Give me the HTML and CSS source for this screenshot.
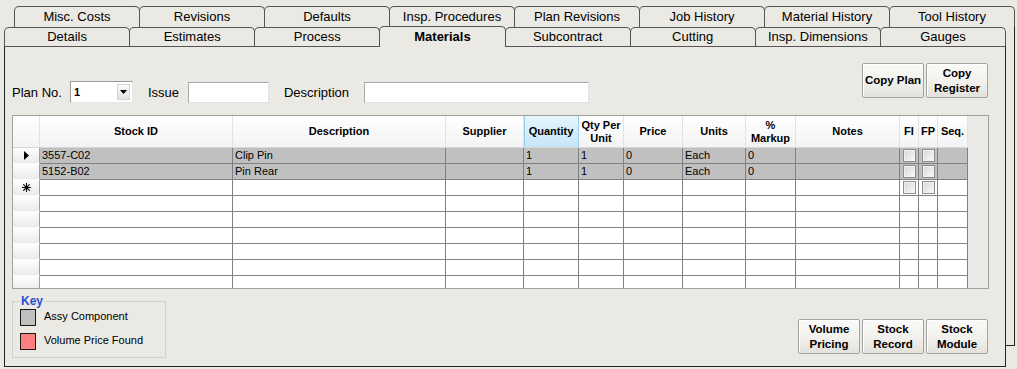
FILE: index.html
```html
<!DOCTYPE html>
<html lang="en">

<head>
  <meta charset="utf-8">
  <meta name="viewport" content="width=device-width, initial-scale=1.0">
  <title>Plan - Materials</title>
  <link rel="stylesheet" href="styles.css">
</head>

<body>
  <div id="tab-control">

    <div class="tab-row back-row">
      <div class="tab">Misc. Costs</div>
      <div class="tab">Revisions</div>
      <div class="tab">Defaults</div>
      <div class="tab">Insp. Procedures</div>
      <div class="tab">Plan Revisions</div>
      <div class="tab">Job History</div>
      <div class="tab">Material History</div>
      <div class="tab">Tool History</div>
    </div>

    <div id="back-panel">
      <div id="front">

        <div class="tab-row front-row">
          <div class="tab">Details</div>
          <div class="tab">Estimates</div>
          <div class="tab">Process</div>
          <div class="tab selected">Materials</div>
          <div class="tab">Subcontract</div>
          <div class="tab">Cutting</div>
          <div class="tab">Insp. Dimensions</div>
          <div class="tab">Gauges</div>
        </div>

        <main id="page">

          <div class="top-bar">
            <div class="fields">
              <label class="lbl lbl-plan">Plan No.</label>
              <div class="combo">
                <span class="combo-value">1</span>
                <span class="combo-drop">
                  <svg width="7" height="4" viewBox="0 0 7 4"><path d="M0 0H7L3.5 4Z" fill="#000"/></svg>
                </span>
              </div>
              <label class="lbl lbl-issue">Issue</label>
              <input type="text" class="field field-issue">
              <label class="lbl lbl-desc">Description</label>
              <input type="text" class="field field-desc">
            </div>
            <div class="btn-group top-buttons">
              <button type="button" class="btn">Copy Plan</button>
              <button type="button" class="btn">Copy<br>Register</button>
            </div>
          </div>

          <div class="grid">
            <div class="grid-row grid-head">
              <div class="hcell"></div>
              <div class="hcell">Stock ID</div>
              <div class="hcell">Description</div>
              <div class="hcell">Supplier</div>
              <div class="hcell sorted">Quantity</div>
              <div class="hcell">Qty Per<br>Unit</div>
              <div class="hcell">Price</div>
              <div class="hcell">Units</div>
              <div class="hcell">%<br>Markup</div>
              <div class="hcell">Notes</div>
              <div class="hcell">FI</div>
              <div class="hcell">FP</div>
              <div class="hcell">Seq.</div>
            </div>

            <div class="grid-row assy">
              <div class="rowhdr">
                <svg width="5" height="9" viewBox="0 0 5 9"><path d="M0 0L5 4.5L0 9Z" fill="#000"/></svg>
              </div>
              <div class="cell">3557-C02</div>
              <div class="cell">Clip Pin</div>
              <div class="cell"></div>
              <div class="cell">1</div>
              <div class="cell">1</div>
              <div class="cell">0</div>
              <div class="cell">Each</div>
              <div class="cell">0</div>
              <div class="cell"></div>
              <div class="cell check-cell"><span class="check"></span></div>
              <div class="cell check-cell"><span class="check"></span></div>
              <div class="cell"></div>
            </div>

            <div class="grid-row assy">
              <div class="rowhdr"></div>
              <div class="cell">5152-B02</div>
              <div class="cell">Pin Rear</div>
              <div class="cell"></div>
              <div class="cell">1</div>
              <div class="cell">1</div>
              <div class="cell">0</div>
              <div class="cell">Each</div>
              <div class="cell">0</div>
              <div class="cell"></div>
              <div class="cell check-cell"><span class="check"></span></div>
              <div class="cell check-cell"><span class="check"></span></div>
              <div class="cell"></div>
            </div>

            <div class="grid-row">
              <div class="rowhdr">
                <svg width="9" height="9" viewBox="0 0 9 9"><path d="M4.5 0V9M0 4.5H9M1.3 1.3L7.7 7.7M7.7 1.3L1.3 7.7" stroke="#000" stroke-width="1.1"/></svg>
              </div>
              <div class="cell"></div>
              <div class="cell"></div>
              <div class="cell"></div>
              <div class="cell"></div>
              <div class="cell"></div>
              <div class="cell"></div>
              <div class="cell"></div>
              <div class="cell"></div>
              <div class="cell"></div>
              <div class="cell check-cell"><span class="check"></span></div>
              <div class="cell check-cell"><span class="check"></span></div>
              <div class="cell"></div>
            </div>

            <div class="grid-row"><div class="rowhdr"></div><div class="cell"></div><div class="cell"></div><div class="cell"></div><div class="cell"></div><div class="cell"></div><div class="cell"></div><div class="cell"></div><div class="cell"></div><div class="cell"></div><div class="cell"></div><div class="cell"></div><div class="cell"></div></div>
            <div class="grid-row"><div class="rowhdr"></div><div class="cell"></div><div class="cell"></div><div class="cell"></div><div class="cell"></div><div class="cell"></div><div class="cell"></div><div class="cell"></div><div class="cell"></div><div class="cell"></div><div class="cell"></div><div class="cell"></div><div class="cell"></div></div>
            <div class="grid-row"><div class="rowhdr"></div><div class="cell"></div><div class="cell"></div><div class="cell"></div><div class="cell"></div><div class="cell"></div><div class="cell"></div><div class="cell"></div><div class="cell"></div><div class="cell"></div><div class="cell"></div><div class="cell"></div><div class="cell"></div></div>
            <div class="grid-row"><div class="rowhdr"></div><div class="cell"></div><div class="cell"></div><div class="cell"></div><div class="cell"></div><div class="cell"></div><div class="cell"></div><div class="cell"></div><div class="cell"></div><div class="cell"></div><div class="cell"></div><div class="cell"></div><div class="cell"></div></div>
            <div class="grid-row"><div class="rowhdr"></div><div class="cell"></div><div class="cell"></div><div class="cell"></div><div class="cell"></div><div class="cell"></div><div class="cell"></div><div class="cell"></div><div class="cell"></div><div class="cell"></div><div class="cell"></div><div class="cell"></div><div class="cell"></div></div>
            <div class="grid-row"><div class="rowhdr"></div><div class="cell"></div><div class="cell"></div><div class="cell"></div><div class="cell"></div><div class="cell"></div><div class="cell"></div><div class="cell"></div><div class="cell"></div><div class="cell"></div><div class="cell"></div><div class="cell"></div><div class="cell"></div></div>
          </div>

          <div class="bottom-bar">
            <fieldset class="key">
              <legend>Key</legend>
              <div class="key-item">
                <span class="swatch swatch-assy"></span>
                <span>Assy Component</span>
              </div>
              <div class="key-item">
                <span class="swatch swatch-volume"></span>
                <span>Volume Price Found</span>
              </div>
            </fieldset>
            <div class="btn-group bottom-buttons">
              <button type="button" class="btn">Volume<br>Pricing</button>
              <button type="button" class="btn">Stock<br>Record</button>
              <button type="button" class="btn">Stock<br>Module</button>
            </div>
          </div>

        </main>
      </div>
    </div>
  </div>
</body>

</html>
```

FILE: styles.css
```css
html {
  height: 100%;
}

body {
  margin: 0;
  padding-top: 6px;
  min-height: 100%;
  box-sizing: border-box;
  background-color: #ebe9e3;
  font-family: "Liberation Sans", Arial, Helvetica, sans-serif;
  color: #000;
}

#tab-control {
  margin-left: 14px;
  width: 1001px;
}

/* tabs */

.tab-row {
  display: flex;
}

.back-row {
  height: 21px;
}

.front-row {
  height: 19px;
}

.tab {
  flex: 1;
  box-sizing: border-box;
  border: 1px solid #555;
  border-bottom: none;
  border-radius: 5px 5px 0 0;
  margin-right: -1px;
  text-align: center;
  font-size: 13px;
  line-height: 19px;
  white-space: nowrap;
}

.tab:last-child {
  margin-right: 0;
}

.front-row .tab {
  line-height: 17px;
}

.front-row .selected {
  position: relative;
  z-index: 1;
  height: 21px;
  margin-top: -1px;
  background-color: #ebe9e3;
  font-weight: bold;
  line-height: 20px;
}

#back-panel {
  box-sizing: border-box;
  width: 1001px;
  border-right: 1px solid #222;
  border-bottom: 1px solid #222;
}

#front {
  margin-left: -10px;
  width: 1002px;
  margin-bottom: -22px;
}

#page {
  box-sizing: border-box;
  height: 321px;
  padding: 0 16px 0 7px;
  background-color: #ebe9e3;
  border: 1px solid #222;
  border-top-color: #555;
}

/* top fields */

.top-bar {
  display: flex;
  justify-content: space-between;
  align-items: flex-start;
  height: 56px;
}

.fields {
  display: flex;
  align-items: center;
  height: 22px;
  margin-top: 34px;
}

.lbl {
  font-size: 13px;
}

.lbl-plan {
  margin-right: 8px;
}

.lbl-issue {
  margin-left: 15px;
  margin-right: 9px;
}

.lbl-desc {
  margin-left: 15px;
  margin-right: 15px;
}

.combo {
  box-sizing: border-box;
  width: 63px;
  height: 22px;
  display: flex;
  align-items: center;
  justify-content: space-between;
  background-color: white;
  border: 1px solid;
  border-color: #9a9a9a #e6e6e6 #e6e6e6 #9a9a9a;
  padding: 0 2px 0 3px;
}

.combo-value {
  font-size: 11px;
  font-weight: bold;
}

.combo-drop {
  box-sizing: border-box;
  width: 13px;
  height: 16px;
  display: flex;
  align-items: center;
  justify-content: center;
  border: 1px solid #d4d4d4;
  background: linear-gradient(#fbfbfb, #e4e4e4);
}

.field {
  box-sizing: border-box;
  height: 21px;
  margin: 0;
  padding: 0 2px;
  background-color: white;
  border: 1px solid;
  border-color: #a8a8a8 #e2e2e2 #e2e2e2 #a8a8a8;
  outline: none;
}

.field-issue {
  width: 81px;
}

.field-desc {
  width: 225px;
}

/* buttons */

.btn-group {
  display: flex;
  gap: 2px;
  margin-right: 1px;
}

.top-buttons {
  margin-top: 16px;
}

.btn {
  box-sizing: border-box;
  width: 62px;
  height: 35px;
  margin: 0;
  padding: 0;
  font-family: "Liberation Sans", Arial, sans-serif;
  font-size: 11.5px;
  font-weight: bold;
  line-height: 15px;
  color: #000;
  border: 1px solid #a4a4a4;
  border-radius: 2px;
  box-shadow: inset 1px 1px 0 #fff;
  background: linear-gradient(#fafaf8, #f1f0ec 55%, #e2e1db);
  cursor: pointer;
}

/* data grid */

.grid {
  box-sizing: border-box;
  height: 174px;
  margin-top: 12px;
  border: 1px solid #a0a0a0;
  background-color: #eceae6;
  overflow: hidden;
}

.grid-row {
  display: grid;
  grid-template-columns: 27px 193px 213px 78px 55px 45px 59px 63px 50px 104px 19px 19px 30px;
  width: 955px;
}

.hcell {
  box-sizing: border-box;
  height: 32px;
  display: flex;
  align-items: center;
  justify-content: center;
  text-align: center;
  font-size: 11px;
  font-weight: bold;
  line-height: 13px;
  background: linear-gradient(#ffffff, #f3f3f3);
  border-right: 1px solid #e2e2e2;
  border-bottom: 1px solid #d6d6d6;
}

.hcell.sorted {
  background: linear-gradient(#e6f5fd, #c5e5f7);
  border-right-color: #96cfee;
  box-shadow: inset 1px 0 0 #96cfee;
}

.rowhdr {
  box-sizing: border-box;
  height: 16px;
  display: flex;
  align-items: center;
  justify-content: center;
  background: linear-gradient(#fdfdfd, #ebebeb);
  border-right: 1px solid #a0a0a0;
  border-bottom: 1px solid #fafafa;
}

.cell {
  box-sizing: border-box;
  height: 16px;
  padding-left: 2px;
  font-size: 11px;
  line-height: 15px;
  white-space: nowrap;
  overflow: hidden;
  background-color: white;
  border-right: 1px solid #808080;
  border-bottom: 1px solid #808080;
}

.assy .cell {
  background-color: #c0c0c0;
}

.check-cell {
  display: flex;
  align-items: center;
  justify-content: center;
  padding-left: 0;
}

.check {
  box-sizing: border-box;
  width: 13px;
  height: 13px;
  border: 1px solid #8e8f8f;
  box-shadow: inset 0 0 0 1px #f2f2f2;
  background: linear-gradient(135deg, #d6d6d6, #fbfbfb);
}

/* key and bottom buttons */

.bottom-bar {
  display: flex;
  justify-content: space-between;
  align-items: flex-start;
  margin-top: 5px;
}

.key {
  box-sizing: border-box;
  width: 154px;
  margin: 0;
  padding: 1px 7px 7px 7px;
  border: 1px solid #d0cfc8;
}

.key legend {
  padding: 0 1px;
  font-size: 12px;
  font-weight: bold;
  line-height: 14px;
  color: #1f52d3;
}

.key-item {
  display: flex;
  align-items: center;
  gap: 8px;
  height: 17px;
  font-size: 11px;
}

.key-item span:last-child {
  margin-top: -3px;
}

.key-item + .key-item {
  margin-top: 7px;
}

.swatch {
  box-sizing: border-box;
  width: 16px;
  height: 17px;
  border: 1px solid #1a1a1a;
}

.swatch-assy {
  background-color: #c0c0c0;
}

.swatch-volume {
  background-color: #ff8080;
}

.bottom-buttons {
  margin-top: 25px;
}
```
